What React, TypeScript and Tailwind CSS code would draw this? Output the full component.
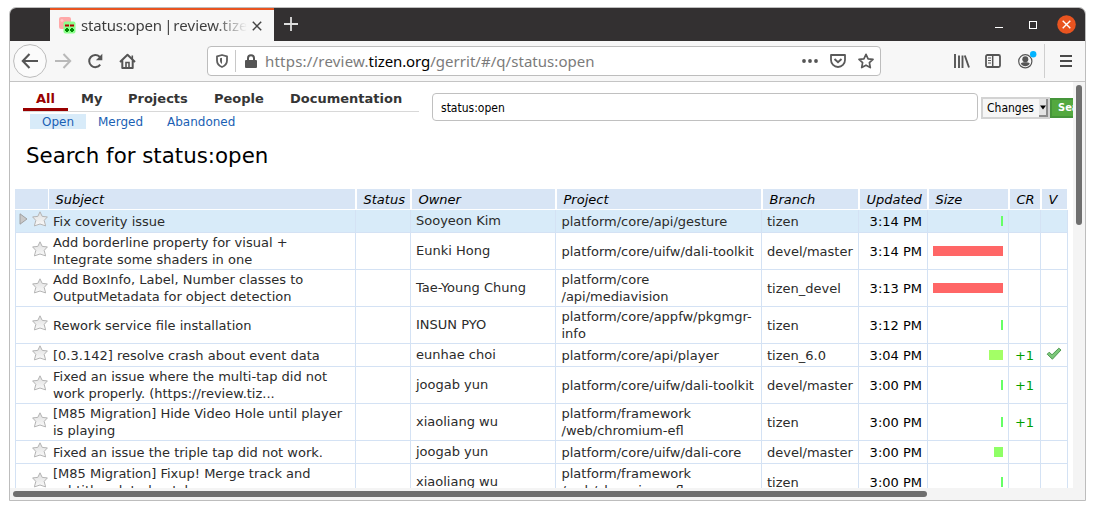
import React from "react";

type Row = {
  h: string;
  subject: string[];
  owner: string;
  project: string[];
  branch: string;
  updated: string;
  bar: string;
  cr?: string;
  v?: boolean;
  selected?: boolean;
};

const TALL = "h-[37px]";
const SHORT = "h-[23px]";
const TINY = "w-[2px] bg-[#66ff66]";

const rows: Row[] = [
  { h: SHORT, subject: ["Fix coverity issue"], owner: "Sooyeon Kim", project: ["platform/core/api/gesture"], branch: "tizen", updated: "3:14 PM", bar: TINY, selected: true },
  { h: TALL, subject: ["Add borderline property for visual +", "Integrate some shaders in one"], owner: "Eunki Hong", project: ["platform/core/uifw/dali-toolkit"], branch: "devel/master", updated: "3:14 PM", bar: "w-[70px] bg-[#ff6666]" },
  { h: TALL, subject: ["Add BoxInfo, Label, Number classes to", "OutputMetadata for object detection"], owner: "Tae-Young Chung", project: ["platform/core", "/api/mediavision"], branch: "tizen_devel", updated: "3:13 PM", bar: "w-[70px] bg-[#ff6666]" },
  { h: TALL, subject: ["Rework service file installation"], owner: "INSUN PYO", project: ["platform/core/appfw/pkgmgr-", "info"], branch: "tizen", updated: "3:12 PM", bar: TINY },
  { h: SHORT, subject: ["[0.3.142] resolve crash about event data"], owner: "eunhae choi", project: ["platform/core/api/player"], branch: "tizen_6.0", updated: "3:04 PM", bar: "w-[14px] bg-[#a3ff66]", cr: "+1", v: true },
  { h: TALL, subject: ["Fixed an issue where the multi-tap did not", "work properly. (https://review.tiz..."], owner: "joogab yun", project: ["platform/core/uifw/dali-toolkit"], branch: "devel/master", updated: "3:00 PM", bar: TINY, cr: "+1" },
  { h: TALL, subject: ["[M85 Migration] Hide Video Hole until player", "is playing"], owner: "xiaoliang wu", project: ["platform/framework", "/web/chromium-efl"], branch: "tizen", updated: "3:00 PM", bar: TINY, cr: "+1" },
  { h: SHORT, subject: ["Fixed an issue the triple tap did not work."], owner: "joogab yun", project: ["platform/core/uifw/dali-core"], branch: "devel/master", updated: "3:00 PM", bar: "w-[9px] bg-[#8fff66]" },
  { h: TALL, subject: ["[M85 Migration] Fixup! Merge track and", "subtitle related patches"], owner: "xiaoliang wu", project: ["platform/framework", "/web/chromium-efl"], branch: "tizen", updated: "3:00 PM", bar: TINY },
];

const HEAD_GRID = "grid grid-cols-[34px_307px_55px_145px_206px_97px_69px_81px_32px_27px]";
const BODY_GRID = "grid grid-cols-[33px_307px_55px_145px_206px_97px_69px_81px_32px_27px]";

function Star() {
  return (
    <svg width="16" height="16" viewBox="0 0 16 16" className="shrink-0">
      <defs>
        <linearGradient id="starFill" x1="0" y1="0" x2="0" y2="1">
          <stop offset="0" stopColor="#dedede" />
          <stop offset="1" stopColor="#fafafa" />
        </linearGradient>
      </defs>
      <path d="M8 .8 10.2 5.4 15.4 5.9 12.2 9.400 13.600 14.900 8 13 2.400 14.900 3.800 9.400.6 5.900 5.8 5.400Z" fill="url(#starFill)" stroke="#b4b4b4" strokeWidth="1" strokeLinejoin="round" />
    </svg>
  );
}

function Check() {
  return (
    <svg width="16" height="16" viewBox="0 0 16 16">
      <path d="M1.200 8.200 3.200 6.200 6 8.800 12.800 2.200 15 4 6.400 13.200Z" fill="#7cc87a" stroke="#4f9a50" strokeWidth="1" strokeLinejoin="round" />
    </svg>
  );
}

function Lines({ lines }: { lines: string[] }) {
  return (
    <div className="whitespace-nowrap leading-[17px]">
      {lines.map((l) => (
        <div key={l}>{l}</div>
      ))}
    </div>
  );
}

const CELL = "flex items-center border-r border-[#d4e2f4] px-[5px]";

function TableRow({ r }: { r: Row }) {
  return (
    <div className={`${BODY_GRID} ${r.h} shrink-0 border-b border-l border-[#d4e2f4] ${r.selected ? "bg-[#d8ebf9]" : "bg-white"}`}>
      <div className="-ml-px flex items-center pb-[4px] pl-[4px]">
        <div className="mr-[5px] w-[8px] shrink-0">
          {r.selected && (
            <svg width="9" height="12" viewBox="0 0 9 12">
              <path d="M1 .8 8 6 1 11.2Z" fill="#c9c9c9" stroke="#9b9b9b" strokeWidth=".9" />
            </svg>
          )}
        </div>
        <Star />
      </div>
      <div className={`${CELL} pl-[4px]`}><Lines lines={r.subject} /></div>
      <div className={CELL} />
      <div className={`${CELL} pb-[1px]`}><div className="whitespace-nowrap">{r.owner}</div></div>
      <div className={`${CELL} pl-[5.5px]`}><Lines lines={r.project} /></div>
      <div className={CELL}><Lines lines={[r.branch]} /></div>
      <div className={`${CELL} justify-end text-black`}><Lines lines={[r.updated]} /></div>
      <div className={`${CELL} justify-end`}><div className={`h-[10px] ${r.bar}`} /></div>
      <div className={`${CELL} justify-center px-0 text-[#00a000]`}>{r.cr && <Lines lines={[r.cr]} />}</div>
      <div className={`${CELL} justify-center px-0 pb-[3px]`}>{r.v && <Check />}</div>
    </div>
  );
}

function Th({ children }: { children: React.ReactNode }) {
  return <div className="mx-px bg-[#d8e5f5] pl-[6.5px] pt-[2px] leading-[18px]">{children}</div>;
}

function BrowserTitle() {
  return (
    <div className="flex h-[33px] shrink-0 bg-[#333031]">
      <div className="ml-[40px] flex w-[224px] items-center border-t-2 border-[#e95420] bg-[#f7f7f7] pl-[9px]">
        <svg width="17" height="17" viewBox="0 0 17 17" className="shrink-0">
          <rect x="0" y="0" width="12" height="12" rx="2" fill="#ffa9a9" />
          <path d="M1.500 3.500h3M3 2v3" stroke="#ffc8c8" strokeWidth="1.4" />
          <rect x="4.5" y="4.5" width="12" height="12" rx="2" fill="#8dff8d" />
          <path d="M6 8.500h4M11 8.500h4" stroke="#b00000" strokeWidth="2" />
          <path d="M6 13h4M8 11v4M11 13h4M13 11v4" stroke="#008a00" strokeWidth="2" />
        </svg>
        <div className="ml-[5px] w-[166px] overflow-hidden whitespace-nowrap bg-linear-to-r from-[#3b3b3b] from-80% to-[#3b3b3b00] to-100% bg-clip-text font-['Noto_Sans'] text-[15px] tracking-[-0.2px] text-transparent">
          <span>status:open</span><span className="tracking-[-1.5px]"> | </span><span className="tracking-[0.05px]">review.tizen.org</span>
        </div>
        <svg width="10" height="10" viewBox="0 0 10 10" className="ml-[5px]">
          <path d="M.8.8 9.200 9.200M9.200.8.8 9.200" stroke="#444" strokeWidth="1.5" />
        </svg>
      </div>
      <svg width="14" height="14" viewBox="0 0 14 14" className="ml-[10px] mt-[9px]">
        <path d="M7 0v14M0 7h14" stroke="#dedede" strokeWidth="1.8" />
      </svg>
      <div className="ml-auto mr-[9px] flex items-center">
        <div className="mr-[26px] mt-[5px] h-px w-[8px] bg-white" />
        <div className="mr-[20px] h-[8px] w-[8px] border border-white" />
        <svg width="19" height="19" viewBox="0 0 19 19">
          <circle cx="9.500" cy="9.500" r="9.300" fill="#e95420" />
          <path d="M5.700 5.700 13.300 13.300M13.300 5.700 5.700 13.300" stroke="#fff" strokeWidth="1.4" />
        </svg>
      </div>
    </div>
  );
}

function Toolbar() {
  return (
    <div className="flex h-[41px] shrink-0 items-center border-b border-[#c4c4c4] bg-[#f7f7f7]">
      <svg width="34" height="34" viewBox="0 0 34 34" className="ml-[3px]">
        <circle cx="17" cy="17" r="16.400" fill="#fbfbfb" stroke="#bcbcbc" />
        <path d="M25 17H10M16.500 10 9.800 17 16.500 24" fill="none" stroke="#555" strokeWidth="2.1" />
      </svg>
      <svg width="18" height="16" viewBox="0 0 18 16" className="ml-[7px]">
        <path d="M1 8h15M9.500 1 16.200 8 9.500 15" fill="none" stroke="#b9b9b9" strokeWidth="2" />
      </svg>
      <svg width="17" height="16" viewBox="0 0 17 16" className="ml-[15px]">
        <path d="M13.200 11.700A6.100 6.100 0 1 1 12.600 3.700L14 5.200" fill="none" stroke="#555" strokeWidth="2" />
        <path d="M15.300.8v6.400H8.900Z" fill="#555" />
      </svg>
      <svg width="17" height="17" viewBox="0 0 17 17" className="ml-[15px]">
        <path d="M1 9 8.500 1.800 16 9M3.300 7.500V15h10.400V7.500" fill="none" stroke="#555" strokeWidth="2" strokeLinejoin="round" />
        <path d="M7 15V9.500h3V15M13.300 2.500v4" fill="none" stroke="#555" strokeWidth="1.600" />
      </svg>
      <div className="ml-[71px] flex h-[30px] w-[674px] items-center rounded-[4px] border border-[#bdbdbd] bg-white">
        <svg width="12" height="14" viewBox="0 0 12 14" className="ml-[8px]">
          <path d="M6 1 11 2.300V6.500C11 9.500 9 11.800 6 13 3 11.800 1 9.500 1 6.500V2.300Z" fill="none" stroke="#5f5f5f" strokeWidth="1.800" strokeLinejoin="round" />
          <path d="M6 3.800V10C4.700 9.200 4 8 4 6.500V4.200Z" fill="#5f5f5f" />
        </svg>
        <div className="ml-[7px] h-[22px] w-px bg-[#c8c8c8]" />
        <svg width="12" height="14" viewBox="0 0 12 14" className="ml-[9px]">
          <path d="M3 7V4.200a3 3 0 0 1 6 0V7" fill="none" stroke="#555" strokeWidth="2" />
          <rect x="0" y="6" width="12" height="8" rx="1" fill="#555" />
        </svg>
        <div className="ml-[8px] whitespace-nowrap font-['Noto_Sans'] text-[15px] text-[#7b7b7b]">
          <span className="tracking-[0.2px]">https://review.</span><span className="tracking-[-0.1px] text-black">tizen.org</span><span className="tracking-[0.04px]">/gerrit/#/q/status:open</span>
        </div>
        <div className="ml-auto mr-[6px] flex items-center">
          <svg width="16" height="4" viewBox="0 0 16 4">
            <circle cx="2" cy="2" r="1.900" fill="#555" /><circle cx="8" cy="2" r="1.900" fill="#555" /><circle cx="14" cy="2" r="1.900" fill="#555" />
          </svg>
          <svg width="16" height="14" viewBox="0 0 16 14" className="ml-[12px]">
            <path d="M1 1h14v5a7 7 0 0 1-14 0Z" fill="none" stroke="#5a5a5a" strokeWidth="1.800" strokeLinejoin="round" />
            <path d="M4.500 5 8 8.300 11.500 5" fill="none" stroke="#5a5a5a" strokeWidth="1.900" />
          </svg>
          <svg width="16" height="16" viewBox="0 0 16 16" className="ml-[12px]">
            <path d="M8 1.300 10.100 5.800 15 6.300 11.400 9.700 12.300 14.600 8 12.200 3.700 14.600 4.600 9.700 1 6.300 5.900 5.800Z" fill="none" stroke="#5a5a5a" strokeWidth="1.700" strokeLinejoin="round" />
          </svg>
        </div>
      </div>
      <svg width="16" height="14" viewBox="0 0 16 14" className="ml-[73px]">
        <path d="M1 0v14M5 1.500V14M8.500 1.500V14M10.800 1.500 15 13.500" stroke="#555" strokeWidth="1.900" />
      </svg>
      <svg width="16" height="14" viewBox="0 0 16 14" className="ml-[15px]">
        <rect x="1" y="1" width="14" height="12" rx="1.500" fill="none" stroke="#555" strokeWidth="1.800" />
        <path d="M7.700 1v12" stroke="#555" strokeWidth="1.500" />
        <path d="M3 4h3M3 6.500h3M3 9h3" stroke="#555" strokeWidth="1" />
      </svg>
      <svg width="19" height="18" viewBox="0 0 19 18" className="mb-[2px] ml-[17px]">
        <circle cx="7.300" cy="10.300" r="6.600" fill="none" stroke="#555" strokeWidth="1.200" />
        <circle cx="7.300" cy="8.200" r="3" fill="#555" />
        <path d="M2.800 12.500C4 11.500 5.500 11.300 7.300 11.300s3.300.2 4.500 1.200C10.800 14.500 9.300 15.200 7.300 15.200S3.800 14.500 2.800 12.500Z" fill="#555" />
        <circle cx="15.200" cy="3.300" r="3.200" fill="#00b3ff" />
      </svg>
      <div className="ml-[7px] h-[34px] w-px bg-[#cfcfcf]" />
      <svg width="12" height="12" viewBox="0 0 12 12" className="ml-[15px]">
        <path d="M.5 1h11M.5 6h11M.5 11h11" stroke="#4a4a4a" strokeWidth="2" strokeLinecap="round" />
      </svg>
    </div>
  );
}

function Page() {
  return (
    <div className="flex h-[406px] w-[1063px] flex-col overflow-hidden bg-white font-['DejaVu_Sans'] text-[13px] text-[#2b2b2b]">
      <div className="flex h-[107px] shrink-0">
        <div className="ml-[13px] w-[396px] shrink-0 whitespace-nowrap">
          <div className="flex h-[30px] border-b border-[#d8d8d8] font-bold leading-[33px] text-[#353535]">
            <div className="h-[29px] w-[45px] border-b-[3px] border-[#990000] pl-[13px] text-[#990000]">All</div>
            <div className="ml-[13px] w-[47px]">My</div>
            <div className="w-[86px]">Projects</div>
            <div className="w-[76px]">People</div>
            <div>Documentation</div>
          </div>
          <div className="ml-[7px] mt-[2px] flex h-[15px] text-[12px] leading-[17px] text-[#1a5fb4]">
            <div className="w-[56px] bg-[#d8ebf9] pl-[12px]">Open</div>
            <div className="ml-[12px] w-[69px]">Merged</div>
            <div>Abandoned</div>
          </div>
          <h1 className="ml-[3px] mt-[14px] text-[21.35px] leading-[25px] text-black">Search for status:open</h1>
        </div>
        <div className="ml-[13px] mt-[11px] flex h-[28px] w-[546px] shrink-0 items-center rounded-[4px] border border-[#c0c0c0] pl-[8px] pt-[2px] font-['DejaVu_Sans_Condensed','DejaVu_Sans'] text-[12px] text-black">status:open</div>
        <div className="ml-[3px] mt-[15px] flex h-[22px] w-[69px] shrink-0 items-center border-2 border-[#d3d3d3] bg-[#f6f6f6] pl-[4px] font-['DejaVu_Sans_Condensed','DejaVu_Sans'] text-[12px] text-black">
          <span>Changes</span>
          <span className="ml-auto flex h-[18px] w-[9px] shrink-0 items-center justify-center border-b-2 border-r-2 border-[#8c8c8c] bg-[#e4e4e4]">
            <svg width="6" height="5" viewBox="0 0 6 5" className="shrink-0"><path d="M0 .5h6L3 4.500Z" fill="#000" /></svg>
          </span>
        </div>
        <div className="mt-[16px] flex h-[20px] w-[60px] shrink-0 items-center border-2 border-[#45953a] bg-[#53a93f] pl-[6px] font-['DejaVu_Sans_Condensed','DejaVu_Sans'] text-[11px] font-bold text-white">Search</div>
      </div>
      <div className="ml-[5px] flex w-[1053px] flex-col">
        <div className={`${HEAD_GRID} mb-px h-[20px] shrink-0 italic text-black`}>
          <div className="mr-px bg-[#d8e5f5]" />
          <div className="mr-px bg-[#d8e5f5] pl-[6.5px] pt-[2px] leading-[18px]">Subject</div>
          <Th>Status</Th>
          <Th>Owner</Th>
          <Th>Project</Th>
          <Th>Branch</Th>
          <Th>Updated</Th>
          <Th>Size</Th>
          <Th>CR</Th>
          <Th>V</Th>
        </div>
        {rows.map((r, i) => (
          <TableRow key={i} r={r} />
        ))}
      </div>
    </div>
  );
}

export default function App() {
  return (
    <div className="h-[510px] w-[1095px] overflow-hidden bg-white pl-[9px] pt-[7px]">
      <div className="flex h-[494px] w-[1077px] flex-col overflow-hidden rounded-t-[7px] border border-[#bdbdbd]">
        <BrowserTitle />
        <Toolbar />
        <div className="flex h-[406px] shrink-0">
          <Page />
          <div className="w-[12px] bg-[#f4f4f4] pl-[3px] pt-[3px]">
            <div className="h-[140px] w-[6px] rounded-full bg-[#6f6f6f]" />
          </div>
        </div>
        <div className="h-[12px] shrink-0 bg-[#f4f4f4] pl-[3px] pt-[3px]">
          <div className="h-[6px] w-[914px] rounded-full bg-[#6f6f6f]" />
        </div>
      </div>
    </div>
  );
}
